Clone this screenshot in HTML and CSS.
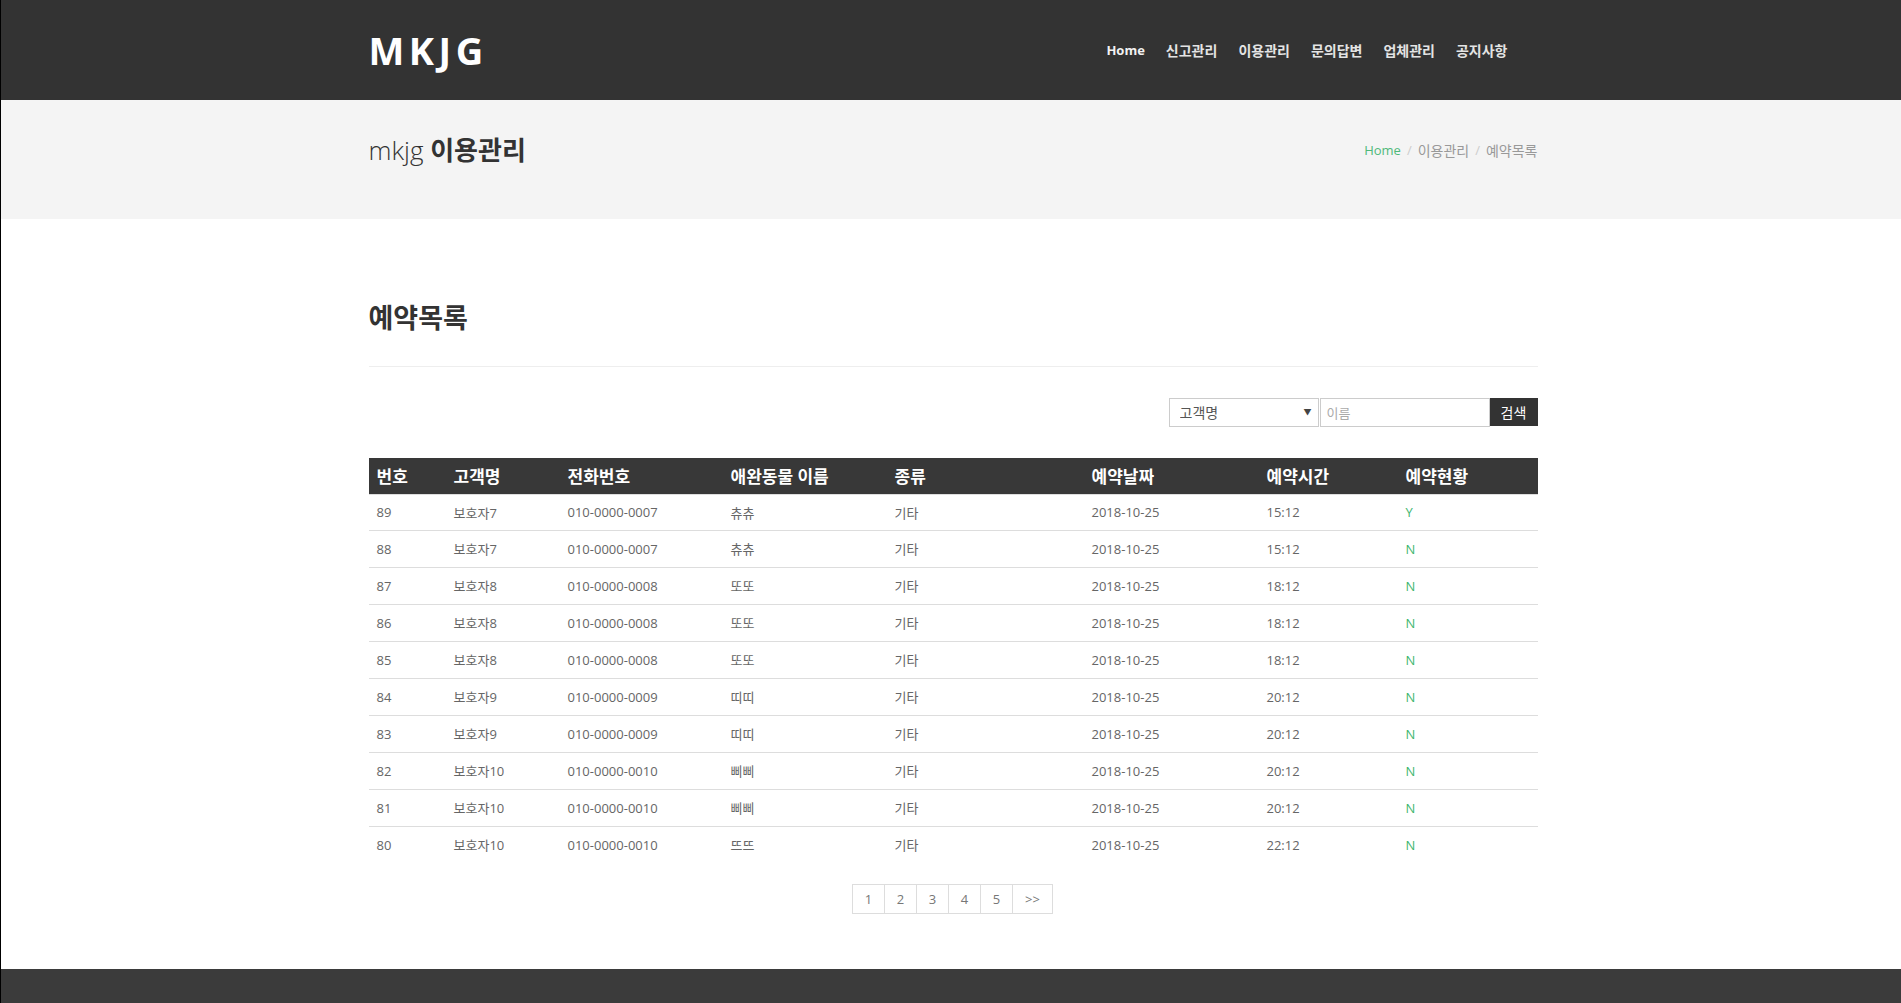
FILE: index.html
```html
<!DOCTYPE html>
<html lang="ko">
<head>
<meta charset="utf-8">
<title>mkjg 이용관리</title>
<link rel="stylesheet" href="styles.css">
</head>
<body>
<div class="page">
  <header class="topbar">
    <div class="container topbar-inner">
      <div class="logo">MKJG</div>
      <nav class="nav">
        <a href="#" class="nav-home">Home</a>
        <a href="#" class="ko">신고관리</a>
        <a href="#" class="ko">이용관리</a>
        <a href="#" class="ko">문의답변</a>
        <a href="#" class="ko">업체관리</a>
        <a href="#" class="ko">공지사항</a>
      </nav>
    </div>
  </header>

  <section class="band">
    <div class="container band-inner">
      <h1 class="page-title"><span class="light">mkjg</span> <b>이용관리</b></h1>
      <ol class="crumbs">
        <li><a href="#">Home</a></li>
        <li class="sep">/</li>
        <li class="ko">이용관리</li>
        <li class="sep">/</li>
        <li class="ko">예약목록</li>
      </ol>
    </div>
  </section>

  <main class="container main">
    <h2 class="section-title">예약목록</h2>
    <hr class="rule">

    <form class="search">
      <div class="select-wrap">
        <select class="select"><option>고객명</option></select>
        <span class="caret">▼</span>
      </div>
      <input class="input" type="text" placeholder="이름">
      <button class="btn" type="button">검색</button>
    </form>

    <table class="list">
      <colgroup>
        <col style="width:77px"><col style="width:114px"><col style="width:163px"><col style="width:164px">
        <col style="width:197px"><col style="width:175px"><col style="width:139px"><col style="width:140px">
      </colgroup>
      <thead>
        <tr><th>번호</th><th>고객명</th><th>전화번호</th><th>애완동물 이름</th><th>종류</th><th>예약날짜</th><th>예약시간</th><th>예약현황</th></tr>
      </thead>
      <tbody>
        <tr><td>89</td><td>보호자7</td><td>010-0000-0007</td><td>츄츄</td><td>기타</td><td>2018-10-25</td><td>15:12</td><td class="st">Y</td></tr>
        <tr><td>88</td><td>보호자7</td><td>010-0000-0007</td><td>츄츄</td><td>기타</td><td>2018-10-25</td><td>15:12</td><td class="st">N</td></tr>
        <tr><td>87</td><td>보호자8</td><td>010-0000-0008</td><td>또또</td><td>기타</td><td>2018-10-25</td><td>18:12</td><td class="st">N</td></tr>
        <tr><td>86</td><td>보호자8</td><td>010-0000-0008</td><td>또또</td><td>기타</td><td>2018-10-25</td><td>18:12</td><td class="st">N</td></tr>
        <tr><td>85</td><td>보호자8</td><td>010-0000-0008</td><td>또또</td><td>기타</td><td>2018-10-25</td><td>18:12</td><td class="st">N</td></tr>
        <tr><td>84</td><td>보호자9</td><td>010-0000-0009</td><td>띠띠</td><td>기타</td><td>2018-10-25</td><td>20:12</td><td class="st">N</td></tr>
        <tr><td>83</td><td>보호자9</td><td>010-0000-0009</td><td>띠띠</td><td>기타</td><td>2018-10-25</td><td>20:12</td><td class="st">N</td></tr>
        <tr><td>82</td><td>보호자10</td><td>010-0000-0010</td><td>삐삐</td><td>기타</td><td>2018-10-25</td><td>20:12</td><td class="st">N</td></tr>
        <tr><td>81</td><td>보호자10</td><td>010-0000-0010</td><td>삐삐</td><td>기타</td><td>2018-10-25</td><td>20:12</td><td class="st">N</td></tr>
        <tr><td>80</td><td>보호자10</td><td>010-0000-0010</td><td>뜨뜨</td><td>기타</td><td>2018-10-25</td><td>22:12</td><td class="st">N</td></tr>
      </tbody>
    </table>

    <div class="pager">
      <a href="#">1</a><a href="#">2</a><a href="#">3</a><a href="#">4</a><a href="#">5</a><a href="#" class="next">&gt;&gt;</a>
    </div>
  </main>

  <footer class="footer"></footer>
</div>
</body>
</html>
```

FILE: styles.css
```css
* { box-sizing: border-box; }

html, body {
  margin: 0;
  padding: 0;
  background: #fff;
}

body {
  font-family: "Open Sans", "Noto Sans CJK KR", sans-serif;
  color: #666;
  font-size: 13px;
}

.page {
  border-left: 1px solid #000;
  min-height: 1003px;
}

.container {
  box-sizing: content-box;
  width: 1169px;
  padding-left: 4px;
  margin: 0 auto;
}

/* top bar */
.topbar {
  background: #333;
  height: 100px;
}

.topbar-inner {
  height: 100px;
  display: flex;
  align-items: center;
  justify-content: space-between;
}

.logo {
  font-family: "Open Sans", sans-serif;
  font-weight: 700;
  font-size: 38px;
  letter-spacing: 4.5px;
  color: #fff;
  line-height: 1;
  margin-top: -1px;
}

.nav {
  display: flex;
  align-items: center;
  gap: 21px;
  padding-right: 30px;
}

.nav a {
  font-family: "Open Sans", "Noto Sans CJK KR", sans-serif;
  font-weight: 700;
  font-size: 13px;
  color: #e4e4e4;
  text-decoration: none;
}

.nav a.ko { font-size: 14px; }

.nav .nav-home { color: #f2f2f2; }

/* page band */
.band {
  background: #f4f4f4;
  height: 119px;
}

.band-inner {
  height: 100%;
  display: flex;
  align-items: center;
  justify-content: space-between;
}

.page-title {
  margin: 0 0 17px;
  font-size: 26px;
  font-weight: 400;
  color: #333;
  line-height: 1.2;
}

.page-title .light { font-weight: 300; }
.page-title b { font-weight: 700; }

.crumbs {
  list-style: none;
  margin: 0 0 20px;
  padding: 0;
  display: flex;
  align-items: center;
  gap: 6px;
  font-size: 13px;
  color: #999;
}

.crumbs .ko { font-size: 14px; }
.crumbs a { color: #4fb97a; text-decoration: none; }
.crumbs .sep { color: #ccc; }

/* main */
.main {
  padding-top: 85px;
}

.section-title {
  margin: 0;
  font-size: 27px;
  line-height: 28px;
  font-weight: 700;
  color: #333;
}

.rule {
  margin: 34px 0 0;
  border: 0;
  border-top: 1px solid #eee;
  height: 0;
}

.search {
  margin-top: 31px;
  display: flex;
  justify-content: flex-end;
  height: 28px;
}

.select-wrap {
  position: relative;
  width: 150px;
  height: 29px;
}

.select {
  appearance: none;
  -webkit-appearance: none;
  width: 100%;
  height: 100%;
  border: 1px solid #ccc;
  background: #fff;
  font-family: "Open Sans", "Noto Sans CJK KR", sans-serif;
  font-size: 14px;
  color: #555;
  padding: 0 10px;
  border-radius: 0;
  margin: 0;
}

.caret {
  position: absolute;
  right: 7px;
  top: 8px;
  font-size: 8px;
  color: #444;
  pointer-events: none;
}

.input {
  width: 170px;
  height: 29px;
  border: 1px solid #ccc;
  margin: 0 0 0 1px;
  padding: 0 6px;
  font-family: "Open Sans", "Noto Sans CJK KR", sans-serif;
  font-size: 13px;
  border-radius: 0;
  outline: none;
}

.input::placeholder { color: #aaa; }

.btn {
  width: 48px;
  height: 28px;
  border: 0;
  background: #333;
  color: #fff;
  font-family: "Open Sans", "Noto Sans CJK KR", sans-serif;
  font-size: 14px;
  padding: 0;
  border-radius: 0;
}

/* table */
.list {
  margin-top: 32px;
  width: 1169px;
  border-collapse: collapse;
  table-layout: fixed;
}

.list th {
  background: #383838;
  color: #fff;
  font-weight: 700;
  font-size: 17px;
  text-align: left;
  height: 36px;
  padding: 0 8px;
  border-bottom: 1px solid #ddd;
}

.list td {
  height: 37px;
  padding: 0 8px;
  border-top: 1px solid #ddd;
  font-size: 13px;
  color: #666;
  vertical-align: middle;
}

.list tbody tr:first-child td { border-top: 0; height: 36px; }

.list td.st { color: #3fb76f; }

/* pager */
.pager {
  margin-top: 21px;
  display: flex;
  justify-content: center;
}

.pager a {
  display: flex;
  align-items: center;
  justify-content: center;
  width: 33px;
  height: 30px;
  border: 1px solid #ddd;
  margin-left: -1px;
  color: #777;
  text-decoration: none;
  font-size: 13px;
}

.pager a.next { width: 41px; }

/* footer */
.footer {
  margin-top: 55px;
  background: #3b3b3b;
  height: 120px;
}
```
